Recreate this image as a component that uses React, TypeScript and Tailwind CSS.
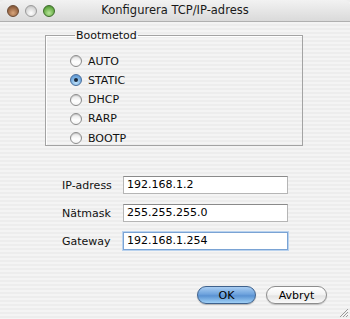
const font = { fontFamily: '"DejaVu Sans", "Liberation Sans", sans-serif' };

function Radio({ label, checked }: { label: string; checked?: boolean }) {
  return (
    <div className="flex items-center h-[12px]">
      {checked ? (
        <span className="w-[12px] h-[12px] rounded-full border border-[#4a6f9c] bg-[radial-gradient(circle_at_50%_75%,#bfe2fb_0%,#78aee0_55%,#4d86c7_100%)] flex items-center justify-center">
          <span className="w-[4px] h-[4px] rounded-full bg-[#1a2a3d]" />
        </span>
      ) : (
        <span className="w-[12px] h-[12px] rounded-full border border-[#8c8c8c] bg-[linear-gradient(180deg,#e4e4e4_0%,#ffffff_60%,#f4f4f4_100%)] shadow-[inset_0_1px_1px_rgba(0,0,0,0.15)]" />
      )}
      <span className="ml-[6px] text-[11px] leading-none text-[#111]">{label}</span>
    </div>
  );
}

function Field({ label, value, focus }: { label: string; value: string; focus?: boolean }) {
  return (
    <div className="flex items-center h-[18px]">
      <span className="w-[61px] text-[11px] text-[#111] pt-[2px]">{label}</span>
      <div
        className={
          focus
            ? "w-[165px] h-[18px] border border-[#7aa3d4] shadow-[0_0_0_1px_#b9d2ee] bg-white flex items-center pl-[3px] text-[11px] text-black"
            : "w-[165px] h-[18px] border border-[#b5b5b5] border-t-[#8a8a8a] bg-white flex items-center pl-[3px] text-[11px] text-black"
        }
      >
        {value}
      </div>
    </div>
  );
}

export default function App() {
  return (
    <div
      className="w-[350px] h-[319px] flex flex-col overflow-hidden bg-[repeating-linear-gradient(180deg,#ededed_0px,#ededed_2px,#f4f4f4_2px,#f4f4f4_4px)] relative"
      style={font}
    >
      {/* titelrad */}
      <div className="h-[22px] flex items-center relative bg-[linear-gradient(180deg,#f2f2f2_0%,#e6e6e6_50%,#dadada_100%)] border-b border-[#b0b0b0] rounded-t-[5px]">
        <div className="flex items-center gap-[6px] pl-[7px]">
          <span className="w-[12px] h-[12px] rounded-full border border-[#6b4a33] bg-[radial-gradient(circle_at_50%_70%,#d9a67c_0%,#9a6846_60%,#6f4a30_100%)]" />
          <span className="w-[12px] h-[12px] rounded-full border border-[#9a9a9a] bg-[radial-gradient(circle_at_50%_70%,#ffffff_0%,#d8d8d8_60%,#b0b0b0_100%)]" />
          <span className="w-[12px] h-[12px] rounded-full border border-[#3d6b2a] bg-[radial-gradient(circle_at_50%_70%,#b8e59a_0%,#6bb04a_60%,#3f7e2a_100%)]" />
        </div>
        <span className="absolute left-0 right-0 text-center text-[11.5px] text-[#1a1a1a] pt-[1px]">
          Konfigurera TCP/IP-adress
        </span>
      </div>

      {/* bootmetod */}
      <fieldset className="ml-[45px] mt-[7px] w-[258px] border border-[#a3a3a3] shadow-[inset_1px_1px_0_#fff] pl-[24px] pr-0 pt-[13px] pb-0 m-0">
        <legend className="ml-[5px] px-[1px] text-[11px] leading-[13px] text-[#111]">Bootmetod</legend>
        <div className="flex flex-col gap-[7.25px] pb-[1px]">
          <Radio label="AUTO" />
          <Radio label="STATIC" checked />
          <Radio label="DHCP" />
          <Radio label="RARP" />
          <Radio label="BOOTP" />
        </div>
      </fieldset>

      {/* adresser */}
      <div className="ml-[62px] mt-[30px] flex flex-col gap-[10px]">
        <Field label="IP-adress" value="192.168.1.2" />
        <Field label="Nätmask" value="255.255.255.0" />
        <Field label="Gateway" value="192.168.1.254" focus />
      </div>

      {/* knappar */}
      <div className="flex justify-end gap-[10px] pr-[23px] mt-[36px]">
        <button className="w-[59px] h-[18px] rounded-full border border-[#3e618c] bg-[linear-gradient(180deg,#a9cdf2_0%,#6ea3dd_45%,#5a92d2_55%,#9fd0f6_100%)] text-[11px] text-black leading-none shadow-[0_1px_1px_rgba(0,0,0,0.25)]">
          OK
        </button>
        <button className="w-[61px] h-[18px] rounded-full border border-[#8d8d8d] bg-[linear-gradient(180deg,#ffffff_0%,#f2f2f2_50%,#e3e3e3_55%,#fafafa_100%)] text-[11px] text-black leading-none shadow-[0_1px_1px_rgba(0,0,0,0.2)]">
          Avbryt
        </button>
      </div>

      {/* storleksgrepp */}
      <svg className="absolute right-[1px] bottom-[1px]" width="11" height="11" viewBox="0 0 11 11">
        <path d="M10 2 L2 10 M10 5 L5 10 M10 8 L8 10" stroke="#9a9a9a" strokeWidth="1" />
      </svg>
    </div>
  );
}
